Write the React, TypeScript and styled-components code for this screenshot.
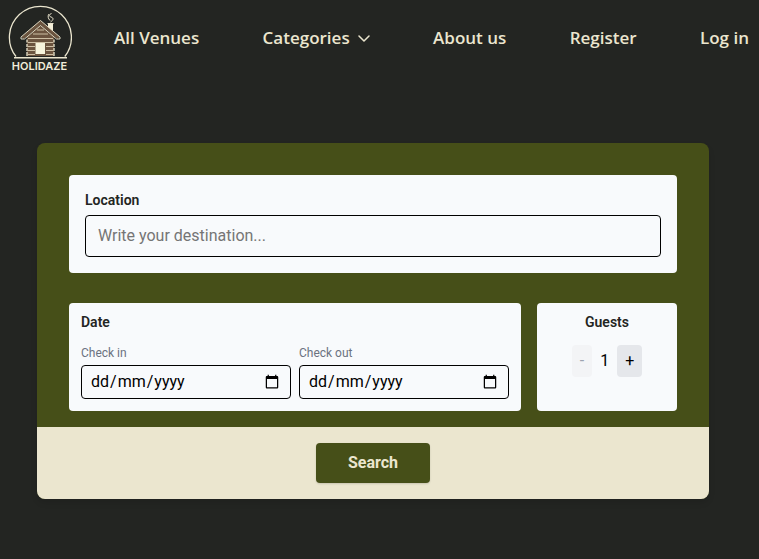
import React, { useState } from "react";
import styled, { createGlobalStyle } from "styled-components";

const color = {
  night: "#232522",
  olive: "#464f18",
  cream: "#ebe6cf",
  panel: "#f8fafc",
  muted: "#6b7280",
};

const GlobalStyle = createGlobalStyle`
  *, *::before, *::after { box-sizing: border-box; }
  body {
    margin: 0;
    background: ${color.night};
    color: ${color.night};
    font-family: Roboto, "Liberation Sans", sans-serif;
    font-size: 16px;
    line-height: 24px;
  }
  button, input { font: inherit; }
`;

const Header = styled.header`
  display: flex;
  align-items: center;
  gap: 42px;
  height: 76px;
  padding: 0 10px 0 8px;
`;

const LogoLink = styled.a`
  display: block;
  flex: none;
  line-height: 0;
`;

const Nav = styled.nav`
  flex: 1;
  display: flex;
  align-items: center;
  justify-content: space-between;
`;

const navText = `
  padding: 0;
  border: 0;
  background: none;
  color: ${color.cream};
  font-family: "Open Sans", "Noto Sans", sans-serif;
  font-size: 17px;
  font-weight: 600;
  line-height: 24px;
  white-space: nowrap;
`;

const NavLink = styled.a`
  ${navText}
  text-decoration: none;
`;

const NavButton = styled.button`
  ${navText}
  display: flex;
  align-items: center;
  gap: 8px;
  cursor: pointer;
`;

const Main = styled.main`
  padding: 67px 50px 60px 37px;
`;

const SearchCard = styled.form`
  max-width: 672px;
  margin: 0 auto;
  border-radius: 8px;
  overflow: hidden;
  background: ${color.olive};
  box-shadow: 0 4px 6px rgba(0, 0, 0, 0.1);
`;

const Fields = styled.div`
  display: grid;
  grid-template-columns: 1fr 140px;
  gap: 30px 16px;
  padding: 32px 32px 16px;
`;

const Panel = styled.section<{ $wide?: boolean }>`
  grid-column: ${(p) => (p.$wide ? "1 / -1" : "auto")};
  padding: ${(p) => (p.$wide ? "16px" : "12px")};
  border-radius: 4px;
  background: ${color.panel};
`;

const FieldLabel = styled.label`
  display: block;
  margin-bottom: 6px;
  font-size: 14px;
  font-weight: 600;
  line-height: 18px;
`;

const PanelTitle = styled.h2<{ $centered?: boolean }>`
  margin: 0 0 16px;
  font-size: 14px;
  font-weight: 600;
  line-height: 14px;
  text-align: ${(p) => (p.$centered ? "center" : "left")};
`;

const TextInput = styled.input`
  display: block;
  width: 100%;
  height: 42px;
  padding: 7px 12px 9px;
  border: 1px solid #000;
  border-radius: 4px;
  background: transparent;
  color: #000;
  &::placeholder { color: #757575; }
`;

const DateGrid = styled.div`
  display: grid;
  grid-template-columns: 1fr 1fr;
  gap: 8px;
`;

const DateLabel = styled.label`
  display: block;
  color: ${color.muted};
  font-size: 12px;
  line-height: 16px;
`;

const DateBox = styled.div`
  position: relative;
  margin-top: 4px;
`;

const DateInput = styled.input<{ $empty: boolean }>`
  display: block;
  width: 100%;
  height: 34px;
  padding: 4px 8px;
  border: 1px solid #000;
  border-radius: 4px;
  background: transparent;
  color: #000;
  font-size: 16px;
  &::-webkit-datetime-edit { opacity: ${(p) => (p.$empty ? 0 : 1)}; }
`;

const DateHint = styled.span`
  position: absolute;
  inset: 0 auto 0 9px;
  color: #000;
  line-height: 34px;
  pointer-events: none;
`;

const DatePart = styled.span`
  padding: 0 1px;
`;

const Stepper = styled.div`
  display: flex;
  align-items: center;
  justify-content: center;
  gap: 8px;
  color: #000;
`;

const StepButton = styled.button`
  height: 32px;
  padding: 4px 8px;
  border: 0;
  border-radius: 4px;
  background: #e5e7eb;
  color: #000;
  cursor: pointer;
  &:disabled {
    background: #f3f4f6;
    color: #9ca3af;
    cursor: default;
  }
`;

const CardFooter = styled.div`
  display: flex;
  justify-content: center;
  padding: 16px;
  background: ${color.cream};
`;

const SearchButton = styled.button`
  padding: 8px 32px;
  border: 0;
  border-radius: 4px;
  background: ${color.olive};
  color: ${color.cream};
  font-weight: 700;
  box-shadow: 0 1px 2px rgba(0, 0, 0, 0.15);
  cursor: pointer;
`;

function Logo() {
  return (
    <svg width="64" height="68" viewBox="8 4 64 68" fill="none" role="img" aria-label="Holidaze">
      <path d="M16 56.500A31 31 0 1 1 64.800 56.500" stroke="#ebe6cf" strokeWidth="1.3" />
      <path d="M14 57.700H67" stroke="#ebe6cf" strokeWidth="1.4" />
      <path d="M48 30V24H53V35Z" fill="#f3efd9" />
      <path d="M47.500 23.500H53.500" stroke="#ebe6cf" />
      <path d="M50.500 22C53.500 20 54 18 51 17C48.500 16 49 14.500 51.500 13.500M50 20.500C48 18.500 47.500 16 49 14" stroke="#ebe6cf" strokeWidth="1" />
      <path d="M40.500 25L27 37V56H54V37Z" fill="#6b543f" />
      <path d="M37 30H44M33 34H48M28 38.500H53M28 42.500H53M28 46.500H35M46 46.500H53M28 50.500H35M46 50.500H53M28 54.500H35M46 54.500H53" stroke="#d8ccb0" strokeWidth=".9" />
      <path d="M27 39.500v3M27 44v3M27 48v3M27 52v4M54 39.500v3M54 44v3M54 48v3M54 52v4" stroke="#ebe6cf" strokeWidth="1.300" />
      <path d="M22.500 38L40.500 22.700L58.500 38" stroke="#6b543f" strokeWidth="3.200" />
      <path d="M21 37L40.500 20.500L60 37V39H56.500L40.500 25.500L24.500 39H21Z" stroke="#ebe6cf" strokeWidth=".9" />
      <path d="M35.500 43H45V54H35.500Z" fill="#f7f4dc" />
      <text x="39.500" y="70" textAnchor="middle" fill="#f0ecd9" fontFamily="Inter, sans-serif" fontWeight="600" fontSize="11">HOLIDAZE</text>
    </svg>
  );
}

function ChevronDown() {
  return (
    <svg width="12" height="8" viewBox="0 0 12 8" fill="none" aria-hidden="true">
      <path d="M1 2L6 7L11 2" stroke="currentColor" strokeWidth="1.500" strokeLinecap="round" strokeLinejoin="round" />
    </svg>
  );
}

function DateField({ id, label }: { id: string; label: string }) {
  const [value, setValue] = useState("");
  return (
    <div>
      <DateLabel htmlFor={id}>{label}</DateLabel>
      <DateBox>
        <DateInput
          id={id}
          type="date"
          value={value}
          $empty={value === ""}
          onChange={(e) => setValue(e.target.value)}
        />
        {value === "" && (
          <DateHint aria-hidden="true">
            <DatePart>dd</DatePart>/<DatePart>mm</DatePart>/<DatePart>yyyy</DatePart>
          </DateHint>
        )}
      </DateBox>
    </div>
  );
}

export default function App() {
  const [guests, setGuests] = useState(1);
  return (
    <>
      <GlobalStyle />
      <Header>
        <LogoLink href="#home"><Logo /></LogoLink>
        <Nav>
          <NavLink href="#venues">All Venues</NavLink>
          <NavButton type="button">Categories<ChevronDown /></NavButton>
          <NavLink href="#about">About us</NavLink>
          <NavLink href="#register">Register</NavLink>
          <NavLink href="#login">Log in</NavLink>
        </Nav>
      </Header>
      <Main>
        <SearchCard onSubmit={(e) => e.preventDefault()}>
          <Fields>
            <Panel $wide>
              <FieldLabel htmlFor="location">Location</FieldLabel>
              <TextInput id="location" type="text" placeholder="Write your destination..." />
            </Panel>
            <Panel>
              <PanelTitle>Date</PanelTitle>
              <DateGrid>
                <DateField id="check-in" label="Check in" />
                <DateField id="check-out" label="Check out" />
              </DateGrid>
            </Panel>
            <Panel>
              <PanelTitle $centered>Guests</PanelTitle>
              <Stepper>
                <StepButton type="button" aria-label="Fewer guests" disabled={guests === 1} onClick={() => setGuests(guests - 1)}>-</StepButton>
                <span>{guests}</span>
                <StepButton type="button" aria-label="More guests" onClick={() => setGuests(guests + 1)}>+</StepButton>
              </Stepper>
            </Panel>
          </Fields>
          <CardFooter>
            <SearchButton type="submit">Search</SearchButton>
          </CardFooter>
        </SearchCard>
      </Main>
    </>
  );
}
